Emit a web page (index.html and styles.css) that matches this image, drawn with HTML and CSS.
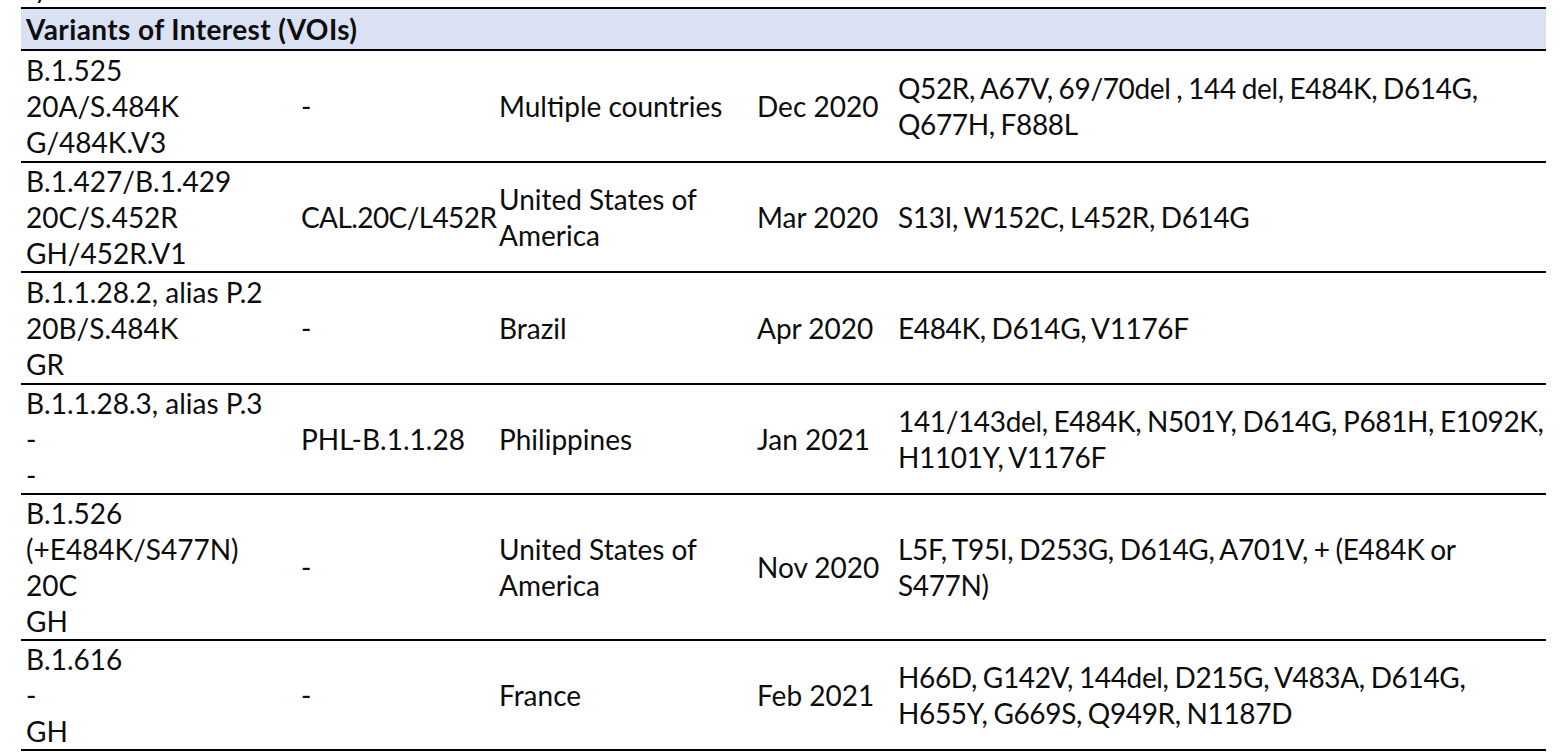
FILE: index.html
```html
<!DOCTYPE html>
<html>
<head>
<meta charset="utf-8">
<title>Variants of Interest</title>
<link rel="stylesheet" href="styles.css">
</head>
<body>
<div class="clipline"><span class="clipline-text">y</span></div>
<table class="voi">
  <colgroup>
    <col class="c1"><col class="c2"><col class="c3"><col class="c4"><col class="c5">
  </colgroup>
  <thead>
    <tr class="head">
      <th colspan="5">Variants of Interest (VOIs)</th>
    </tr>
  </thead>
  <tbody>
    <tr class="r1">
      <td class="lin">B.1.525<br>20A/S.484K<br>G/484K.V3</td>
      <td class="alt">-</td>
      <td class="ctry">Multiple countries</td>
      <td class="date">Dec 2020</td>
      <td class="mut">Q52R, A67V, 69/70del , 144 del, E484K, D614G,<br>Q677H, F888L</td>
    </tr>
    <tr class="r2">
      <td class="lin">B.1.427/B.1.429<br>20C/S.452R<br>GH/452R.V1</td>
      <td class="alt alt-tight">CAL.20C/L452R</td>
      <td class="ctry">United States of<br>America</td>
      <td class="date">Mar 2020</td>
      <td class="mut">S13I, W152C, L452R, D614G</td>
    </tr>
    <tr class="r3">
      <td class="lin">B.1.1.28.2, alias P.2<br>20B/S.484K<br>GR</td>
      <td class="alt">-</td>
      <td class="ctry">Brazil</td>
      <td class="date">Apr 2020</td>
      <td class="mut">E484K, D614G, V1176F</td>
    </tr>
    <tr class="r4">
      <td class="lin">B.1.1.28.3, alias P.3<br>-<br>-</td>
      <td class="alt">PHL-B.1.1.28</td>
      <td class="ctry">Philippines</td>
      <td class="date">Jan 2021</td>
      <td class="mut">141/143del, E484K, N501Y, D614G, P681H, E1092K,<br>H1101Y, V1176F</td>
    </tr>
    <tr class="r5">
      <td class="lin">B.1.526<br>(+E484K/S477N)<br>20C<br>GH</td>
      <td class="alt">-</td>
      <td class="ctry">United States of<br>America</td>
      <td class="date">Nov 2020</td>
      <td class="mut">L5F, T95I, D253G, D614G, A701V, + (E484K or<br>S477N)</td>
    </tr>
    <tr class="r6">
      <td class="lin">B.1.616<br>-<br>GH</td>
      <td class="alt">-</td>
      <td class="ctry">France</td>
      <td class="date">Feb 2021</td>
      <td class="mut">H66D, G142V, 144del, D215G, V483A, D614G,<br>H655Y, G669S, Q949R, N1187D</td>
    </tr>
  </tbody>
</table>
</body>
</html>
```

FILE: styles.css
```css
html, body {
  margin: 0;
  padding: 0;
  background: #ffffff;
}

body {
  font-family: "Lato", "Liberation Sans", sans-serif;
  font-size: 28px;
  color: #0d0d0d;
  width: 1560px;
  height: 754px;
  overflow: hidden;
}

.clipline {
  height: 7px;
  overflow: hidden;
  padding-left: 34px;
  line-height: 36px;
}

.clipline-text {
  display: block;
  margin-top: -31px;
}

.voi {
  border-collapse: collapse;
  margin-left: 21px;
  width: 1525px;
  table-layout: fixed;
}

.c1 { width: 278px; }
.c2 { width: 197px; }
.c3 { width: 251px; }
.c4 { width: 144px; }
.c5 { width: 655px; }

.head th {
  background: #d9e1f2;
  border-top: 2px solid #000000;
  border-bottom: 2px solid #000000;
  text-align: left;
  font-weight: 700;
  letter-spacing: 0.4px;
  height: 40px;
  padding: 0 0 0 5px;
  line-height: 36px;
  vertical-align: middle;
}

.voi td {
  line-height: 36px;
  vertical-align: middle;
  padding: 0;
  white-space: nowrap;
}

.voi tbody tr {
  border-bottom: 2px solid #000000;
}

.lin { padding-left: 5px !important; }
.alt { padding-left: 2px !important; }
.alt-tight { letter-spacing: -0.6px; }
.ctry { padding-left: 3px !important; }
.date { padding-left: 10px !important; }
.mut {
  padding-left: 7px !important;
  letter-spacing: -0.35px;
  word-spacing: -1px;
}

.r1 td { height: 110px; }
.r2 td { height: 107px; }
.r3 td { height: 110px; }
.r4 td { height: 108px; }
.r5 td { height: 144px; }
.r6 td { height: 106px; }
```
